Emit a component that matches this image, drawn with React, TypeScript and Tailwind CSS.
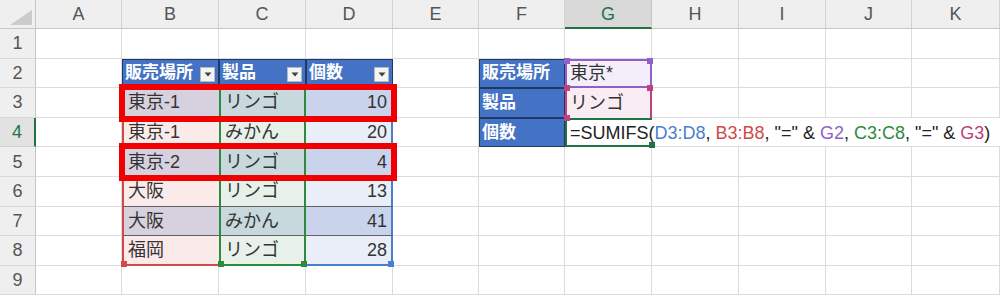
import React from 'react';

const COLS = ['A', 'B', 'C', 'D', 'E', 'F', 'G', 'H', 'I', 'J', 'K'];
const ROWS = [1, 2, 3, 4, 5, 6, 7, 8, 9];

// left table rows 3..8
const TABLE: [string, string, string][] = [
  ['東京-1', 'リンゴ', '10'],
  ['東京-1', 'みかん', '20'],
  ['東京-2', 'リンゴ', '4'],
  ['大阪', 'リンゴ', '13'],
  ['大阪', 'みかん', '41'],
  ['福岡', 'リンゴ', '28'],
];

const HEADERS: Record<string, string> = {
  B2: '販売場所',
  C2: '製品',
  D2: '個数',
  F2: '販売場所',
  F3: '製品',
  F4: '個数',
};

// [normal row, banded row] tints of the referenced ranges
const BAND: Record<string, [string, string]> = {
  B: ['bg-[#fbeaea]', 'bg-[#d7d0de]'],
  C: ['bg-[#e8f1e9]', 'bg-[#c7d9dc]'],
  D: ['bg-[#e9eef8]', 'bg-[#c9d4ec]'],
};

// range border per column of the left table
const RANGE: Record<string, string> = {
  B: 'border-l-2 border-l-[#d04a4a]',
  C: 'border-x-2 border-x-[#2e8b3e]',
  D: 'border-r-2 border-r-[#4a7fd0]',
};
const RANGE_BOTTOM: Record<string, string> = {
  B: 'border-b-2 border-b-[#d04a4a]',
  C: 'border-b-2 border-b-[#2e8b3e]',
  D: 'border-b-2 border-b-[#4a7fd0]',
};

type Corner = 'tl' | 'tr' | 'bl' | 'br';
const CORNER: Record<Corner, string> = {
  tl: '-left-[3px] -top-[3px]',
  tr: '-right-[3px] -top-[3px]',
  bl: '-left-[3px] -bottom-[3px]',
  br: '-right-[3px] -bottom-[3px]',
};

const Handle = ({ at, color }: { at: Corner; color: string }) => (
  <span className={`absolute z-20 w-[6px] h-[6px] ${CORNER[at]} ${color}`} />
);

const DropButton = () => (
  <div className="absolute right-[3px] top-[8px] w-[15px] h-[15px] bg-[#f4f4f4] border border-[#b8b8b8] flex items-center justify-center">
    <svg width="8" height="5" viewBox="0 0 8 5">
      <polygon points="0.5,0.5 7.5,0.5 4,4.5" fill="#404040" />
    </svg>
  </div>
);

const Formula = () => (
  <span className="whitespace-nowrap text-[#222]">
    =SUMIFS(<span className="text-[#4a7fd0]">D3:D8</span>, <span className="text-[#d04a4a]">B3:B8</span>, "=" &amp;{' '}
    <span className="text-[#9060c8]">G2</span>, <span className="text-[#2e8b3e]">C3:C8</span>, "=" &amp;{' '}
    <span className="text-[#c04080]">G3</span>)
  </span>
);

function Cell({ col, row }: { col: string; row: number }) {
  const addr = `${col}${row}`;
  const header = HEADERS[addr];
  const inTable = ['B', 'C', 'D'].includes(col) && row >= 3 && row <= 8;
  const formulaRow = row === 4 && ['H', 'I', 'J', 'K'].includes(col);

  if (header) {
    return (
      <div className="relative flex items-center pl-[3px] text-[17px] bg-[#4472c4] text-white font-bold border-r border-b border-[#1f3864] shadow-[inset_1px_1px_0_#1f3864]">
        {header}
        {row === 2 && col !== 'F' && <DropButton />}
      </div>
    );
  }

  if (inTable) {
    const [name, product, qty] = TABLE[row - 3];
    const banded = row % 2 === 1;
    const bg = BAND[col][banded ? 1 : 0];
    const line = row < 8 ? 'border-b border-b-[#606060]' : RANGE_BOTTOM[col];
    const text = col === 'B' ? name : col === 'C' ? product : qty;
    return (
      <div className={`relative flex items-center px-[4px] text-[#333] ${bg} ${RANGE[col]} ${line} ${col === 'D' ? 'justify-end' : ''}`}>
        {text}
        {row === 8 && col === 'B' && <Handle at="bl" color="bg-[#d04a4a]" />}
        {row === 8 && col === 'C' && <Handle at="bl" color="bg-[#2e8b3e]" />}
        {row === 8 && col === 'C' && <Handle at="br" color="bg-[#2e8b3e]" />}
        {row === 8 && col === 'D' && <Handle at="br" color="bg-[#4a7fd0]" />}
      </div>
    );
  }

  if (addr === 'G2') {
    return (
      <div className="relative flex items-center pl-[3px] text-[#333] bg-[#f3eef9] border-2 border-[#9060c8]">
        東京*
        <Handle at="tl" color="bg-[#9060c8]" />
        <Handle at="tr" color="bg-[#9060c8]" />
      </div>
    );
  }
  if (addr === 'G3') {
    return (
      <div className="relative flex items-center pl-[3px] text-[#333] bg-[#f9ecf3] border-x-2 border-[#c04080]">
        リンゴ
        <Handle at="tl" color="bg-[#c04080]" />
        <Handle at="tr" color="bg-[#c04080]" />
        <Handle at="bl" color="bg-[#c04080]" />
      </div>
    );
  }
  if (addr === 'G4') {
    return (
      <div className="relative z-10 flex items-center pl-[3px] border-l-2 border-y-2 border-[#217346]">
        <Formula />
        <Handle at="br" color="bg-[#217346]" />
      </div>
    );
  }
  if (formulaRow) {
    return <div className="border-b border-[#dcdcdc]" />;
  }
  return <div className="border-r border-b border-[#dcdcdc]" />;
}

export default function App() {
  return (
    <div className="relative w-[1000px] h-[297px] overflow-hidden bg-white font-['Liberation_Sans','Noto_Sans_CJK_JP',sans-serif] text-[18px] leading-none">
      <div className="grid grid-cols-[36px_86px_97px_87px_87px_86px_86px_87px_87px_87px_86px_88px_1fr] grid-rows-[29px_repeat(9,29.6px)]">
        {/* corner */}
        <div className="relative bg-[#efefef] border-r border-b border-[#c6c6c6]">
          <svg className="absolute right-[3px] bottom-[3px]" width="22" height="15" viewBox="0 0 22 15">
            <polygon points="22,0 22,15 0,15" fill="#cbcbcb" />
          </svg>
        </div>
        {COLS.map((c) =>
          c === 'G' ? (
            <div key={c} className="flex items-center justify-center bg-[#d9d9d9] text-[#217346] border-r border-[#c6c6c6] border-b-2 border-b-[#217346]">
              {c}
            </div>
          ) : (
            <div key={c} className="flex items-center justify-center bg-[#efefef] text-[#555] border-r border-b border-[#d2d2d2] border-b-[#c6c6c6]">
              {c}
            </div>
          )
        )}
        <div className="bg-[#efefef] border-b border-[#c6c6c6]" />

        {ROWS.map((r) => (
          <React.Fragment key={r}>
            {r === 4 ? (
              <div className="flex items-center justify-center bg-[#e2e2e2] text-[#217346] border-r-2 border-r-[#217346] border-b border-b-[#d2d2d2]">
                {r}
              </div>
            ) : (
              <div className="flex items-center justify-center bg-[#efefef] text-[#555] border-r border-r-[#c6c6c6] border-b border-b-[#d9d9d9]">
                {r}
              </div>
            )}
            {COLS.map((c) => (
              <Cell key={c} col={c} row={r} />
            ))}
            <div className="border-b border-[#dcdcdc]" />
          </React.Fragment>
        ))}
      </div>

      {/* red annotation boxes drawn over rows 3 and 5 */}
      <div className="absolute left-[119px] top-[84px] w-[278px] h-[38px] border-[6px] border-[#f00000]" />
      <div className="absolute left-[119px] top-[143px] w-[278px] h-[38px] border-[6px] border-[#f00000]" />
    </div>
  );
}
